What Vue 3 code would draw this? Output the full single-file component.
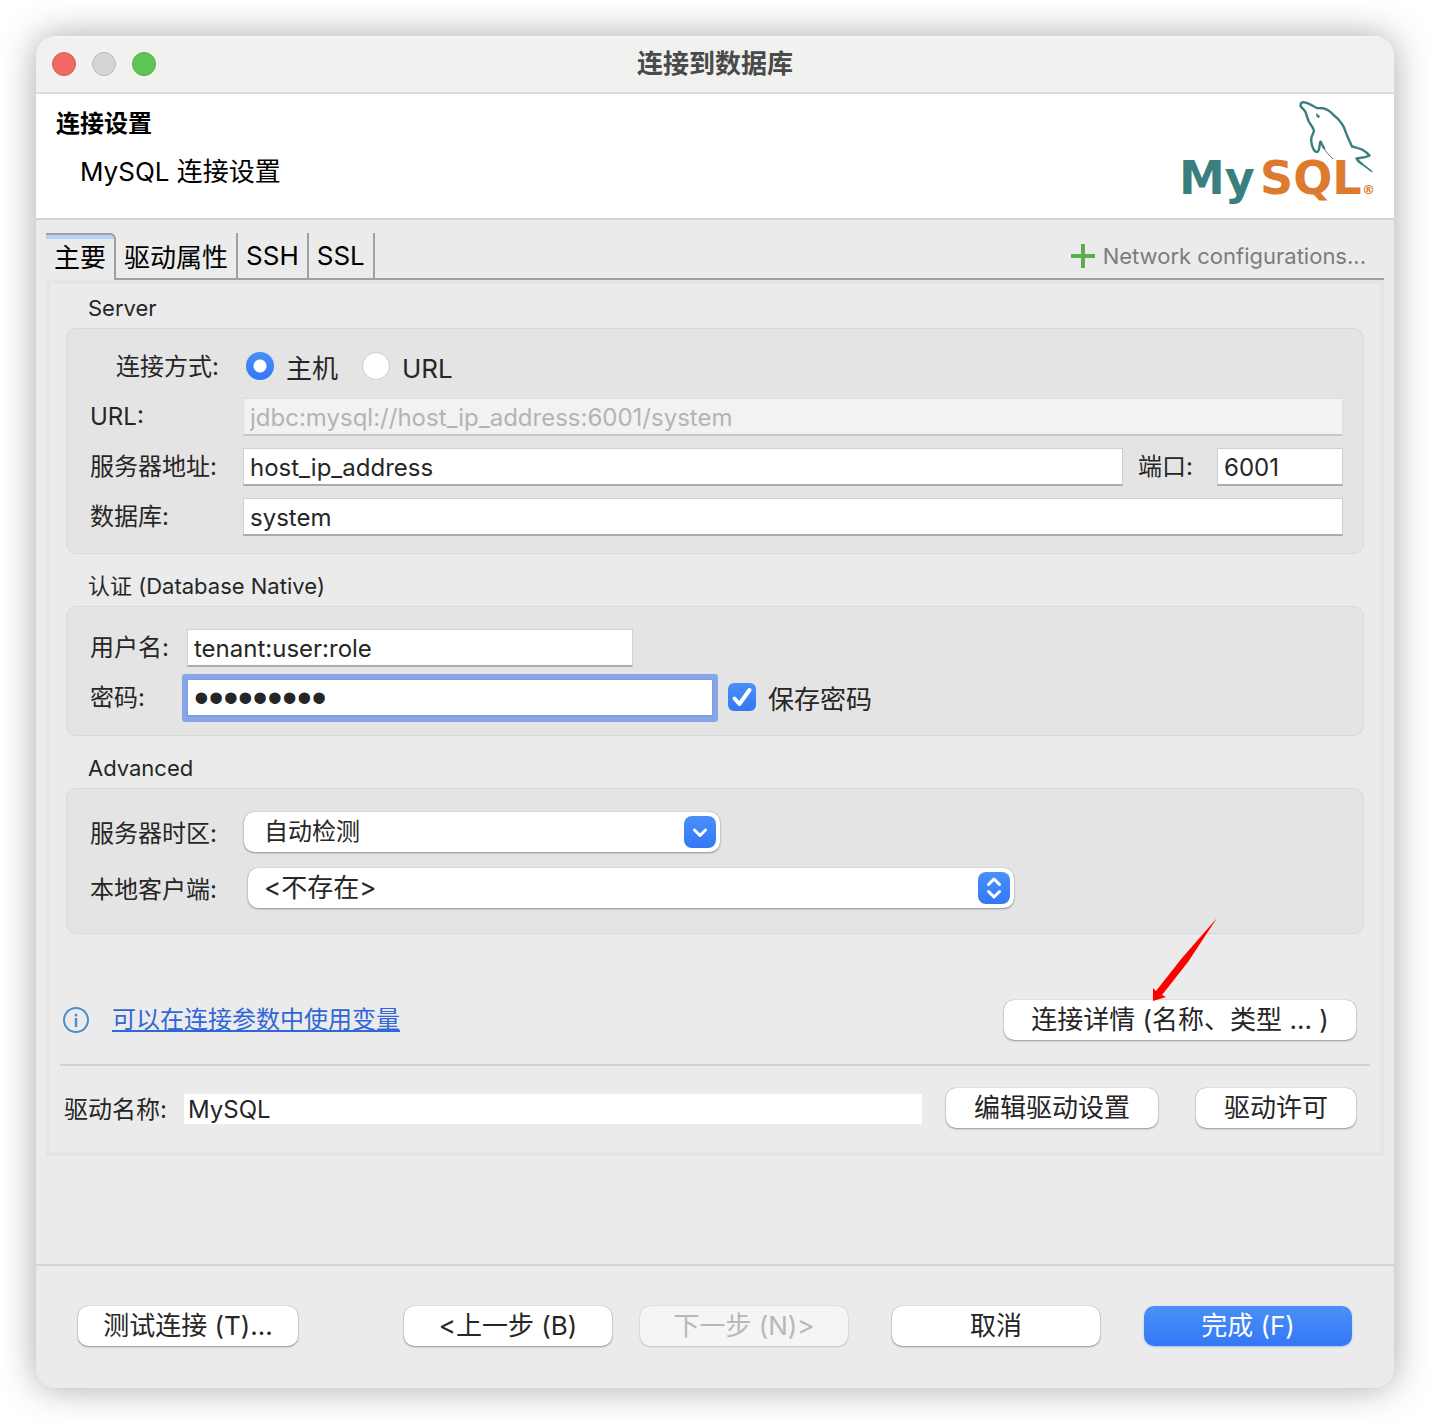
<script setup>
import { ref } from 'vue'

const tabs = ['主要', '驱动属性', 'SSH', 'SSL']
const activeTab = ref(0)

const mode = ref('host')
const url = ref('jdbc:mysql://host_ip_address:6001/system')
const host = ref('host_ip_address')
const port = ref('6001')
const database = ref('system')
const user = ref('tenant:user:role')
const password = ref('password1')
const savePassword = ref(true)
const driver = ref('MySQL')
</script>

<template>
  <div class="desktop">
    <main class="window">
      <header class="titlebar">
        <div class="lights">
          <button class="light close" aria-label="关闭"></button>
          <button class="light minimize" aria-label="最小化" disabled></button>
          <button class="light zoom" aria-label="缩放"></button>
        </div>
        <h1 class="title">连接到数据库</h1>
      </header>

      <div class="banner">
        <div>
          <h2 class="banner-title">连接设置</h2>
          <p class="banner-sub">MySQL 连接设置</p>
        </div>
        <svg class="logo" viewBox="0 0 200 106" width="200" height="106" aria-label="MySQL">
          <g fill="none" stroke="#3a7f80" stroke-linejoin="round" stroke-linecap="round">
            <path stroke-width="2.400" d="M122.700 8C122 5 124 4 126 4.300C130 4.700 134 7.500 138.700 10L145.500 10.300C150 11.500 153 14 155.500 17C159 19.500 162 22.500 164 26C166.500 29.500 167.500 34 169 37.500L174 48.500C177.500 49.500 181 50 184 51.500C187.500 53.500 190 55.500 191.500 57.500C188 59.500 183 59.500 178.500 60.500C179.500 63 182 64.500 184 66" />
            <path stroke-width="1.600" d="M184 66L193.700 73.300" />
            <path stroke-width="2.400" d="M122.700 8C123.500 10 126 11.500 127.500 14L130.500 23C132 26 135 29 136 32.500C135.500 35.500 133.500 37.500 133.200 41C133.200 45 134 49 136 52C137 53.500 138.500 54.500 140 53.500C142 51.500 141 47 142.500 43.500C143.500 45 144.500 48 146 50" />
            <path stroke-width="1" d="M146 50C148 54 151 57.500 154.700 60.500" />
          </g>
          <path d="M138 15L142 18L141 20L138.500 19Z" fill="#3a7f80" />
          <text class="word" x="1" y="96" fill="#3a7f80">My</text>
          <text class="word" x="82" y="96" fill="#dc7b30">SQL</text>
          <text class="reg" x="184" y="96" fill="#dc7b30">®</text>
        </svg>
      </div>

      <div class="body">
        <div class="tabbar">
          <div class="tabs" role="tablist">
            <button
              v-for="(tab, i) in tabs"
              :key="tab"
              role="tab"
              class="tab"
              :class="{ active: i === activeTab }"
              :aria-selected="i === activeTab"
              @click="activeTab = i"
            >{{ tab }}</button>
          </div>
          <div class="tabbar-rest">
            <button class="network">
              <svg viewBox="0 0 24 24" width="24" height="24" aria-hidden="true">
                <path d="M12 0V24M0 12H24" stroke="#62ab50" stroke-width="4" />
              </svg>
              Network configurations...
            </button>
          </div>
        </div>

        <div class="panel" role="tabpanel">
          <h3 class="legend">Server</h3>
          <section class="group server">
            <div class="row">
              <span id="mode-label" class="label wide indent">连接方式:</span>
              <div class="radios" role="radiogroup" aria-labelledby="mode-label">
                <label class="choice"><input v-model="mode" class="radio" type="radio" value="host" /><span class="choice-text">主机</span></label>
                <label class="choice"><input v-model="mode" class="radio" type="radio" value="url" /><span class="choice-text">URL</span></label>
              </div>
            </div>
            <div class="row">
              <label class="label wide" for="url">URL:</label>
              <input id="url" v-model="url" class="field" type="text" disabled />
            </div>
            <div class="row">
              <label class="label wide" for="host">服务器地址:</label>
              <input id="host" v-model="host" class="field" type="text" />
              <label class="label port-label" for="port">端口:</label>
              <input id="port" v-model="port" class="field port" type="text" />
            </div>
            <div class="row">
              <label class="label wide" for="db">数据库:</label>
              <input id="db" v-model="database" class="field" type="text" />
            </div>
          </section>

          <h3 class="legend">认证 (Database Native)</h3>
          <section class="group auth">
            <div class="row">
              <label class="label narrow" for="user">用户名:</label>
              <input id="user" v-model="user" class="field user" type="text" />
            </div>
            <div class="row">
              <label class="label narrow" for="pass">密码:</label>
              <input id="pass" v-model="password" class="field pass" type="password" />
              <label class="choice save">
                <span class="check-box">
                  <input v-model="savePassword" class="check" type="checkbox" />
                  <svg v-if="savePassword" class="tick" viewBox="0 0 28 28" aria-hidden="true">
                    <path d="M6.500 15.500L11.500 21L21.500 7" fill="none" stroke="#fff" stroke-width="4" stroke-linecap="round" stroke-linejoin="round" />
                  </svg>
                </span>
                <span class="choice-text">保存密码</span>
              </label>
            </div>
          </section>

          <h3 class="legend">Advanced</h3>
          <section class="group advanced">
            <div class="row">
              <label class="label wide" for="tz">服务器时区:</label>
              <div class="select-wrap tz">
                <select id="tz" class="select"><option>自动检测</option></select>
                <svg class="chip" viewBox="0 0 32 32" aria-hidden="true">
                  <path d="M10.500 14L16 19.500L21.500 14" />
                </svg>
              </div>
            </div>
            <div class="row">
              <label class="label wide" for="client">本地客户端:</label>
              <div class="select-wrap client">
                <select id="client" class="select large"><option>&lt;不存在&gt;</option></select>
                <svg class="chip" viewBox="0 0 32 32" aria-hidden="true">
                  <path d="M10.500 12.500L16 7L21.500 12.500M10.500 19.500L16 25L21.500 19.500" />
                </svg>
              </div>
            </div>
          </section>

          <div class="hint">
            <svg class="info" viewBox="0 0 26 26" width="26" height="26" aria-hidden="true">
              <circle cx="13" cy="13" r="12" fill="none" stroke="#4a8ecb" stroke-width="2" />
              <circle cx="13" cy="8" r="1.500" fill="#4a8ecb" />
              <path d="M13 11V20" stroke="#4a8ecb" stroke-width="2.500" />
            </svg>
            <a class="link" href="#">可以在连接参数中使用变量</a>
            <div class="details-wrap">
              <button class="btn details">连接详情 (名称、类型 ... )</button>
              <svg class="arrow" viewBox="0 0 66 84" aria-hidden="true">
                <path d="M1 83L1 70L4 73L30 40L65 0L36 44L10 77L14 79Z" fill="#f00" />
              </svg>
            </div>
          </div>

          <div class="driver">
            <label class="label" for="driver">驱动名称:</label>
            <input id="driver" v-model="driver" class="driver-name" type="text" readonly />
            <button class="btn edit">编辑驱动设置</button>
            <button class="btn license">驱动许可</button>
          </div>
        </div>
      </div>

      <footer class="footer">
        <button class="btn test">测试连接 (T)...</button>
        <div class="steps">
          <button class="btn step">&lt;上一步 (B)</button>
          <button class="btn step" disabled>下一步 (N)&gt;</button>
        </div>
        <button class="btn step">取消</button>
        <button class="btn step primary">完成 (F)</button>
      </footer>
    </main>
  </div>
</template>

<style>
body {
  background: #fff;
}
</style>

<style scoped>
.desktop {
  padding: 36px;
  font-family: Inter, "Noto Sans CJK SC", sans-serif;
  font-size: 24px;
  line-height: 32px;
  color: #262626;
}
.desktop * {
  box-sizing: border-box;
}
button,
input,
select {
  font-family: inherit;
  color: inherit;
  margin: 0;
}
h1,
h2,
h3,
p {
  margin: 0;
}
.window {
  background: #ebebeb;
  border-radius: 20px;
  overflow: hidden;
  box-shadow: 0 0 36px rgba(0, 0, 0, 0.34);
}
.titlebar {
  position: relative;
  display: flex;
  align-items: center;
  justify-content: center;
  height: 58px;
  padding-bottom: 2px;
  background: #f1f1ef;
  border-top: 1px solid #fafafa;
  border-bottom: 2px solid #dcdcdc;
}
.lights {
  position: absolute;
  left: 16px;
  top: 15px;
  display: flex;
  gap: 16px;
}
.light {
  width: 24px;
  height: 24px;
  padding: 0;
  border-radius: 50%;
  border: 1px solid;
}
.close {
  background: #ed6b60;
  border-color: #d95b50;
}
.minimize {
  background: #d5d5d4;
  border-color: #b9b9b8;
}
.zoom {
  background: #61c555;
  border-color: #50ae45;
}
.title {
  font-size: 26px;
  font-weight: 700;
  color: #4a4a4a;
}
.banner {
  display: flex;
  justify-content: space-between;
  background: #fff;
  color: #000;
  height: 126px;
  padding: 4px 16px 0 20px;
  border-bottom: 2px solid #d4d4d4;
}
.banner-title {
  margin-top: 10px;
  font-size: 24px;
  font-weight: 700;
}
.banner-sub {
  margin-top: 16px;
  padding-left: 24px;
  font-size: 26px;
}
.word {
  font: 700 46px "DejaVu Sans", sans-serif;
}
.reg {
  font: 700 13px "DejaVu Sans", sans-serif;
}
.body {
  padding: 13px 10px 108px;
}
.tabbar {
  display: flex;
  height: 47px;
}
.tabs {
  display: flex;
}
.tab {
  padding: 0 8px;
  border: 0;
  border-right: 2px solid #a0a0a0;
  border-bottom: 2px solid #a0a0a0;
  background: none;
  color: #000;
  font-size: 26px;
}
.tab.active {
  padding-bottom: 4px;
  border-top: 2px solid #a0a0a0;
  border-bottom: 0;
  border-top-right-radius: 6px;
  background: linear-gradient(#b5d2fb 4px, #ebebeb 4px);
}
.tabbar-rest {
  display: flex;
  flex: 1;
  justify-content: flex-end;
  padding-right: 18px;
  border-bottom: 2px solid #a0a0a0;
}
.network {
  display: flex;
  align-items: center;
  gap: 8px;
  padding: 0;
  border: 0;
  background: none;
  color: #7c7c7c;
  font-size: 22px;
}
.panel {
  border: 4px solid #e5e5e5;
  padding: 4px 16px 24px;
}
.legend {
  padding-left: 22px;
  font-size: 22px;
  font-weight: 400;
  line-height: 40px;
}
.group {
  display: flex;
  flex-direction: column;
  gap: 12px;
  border: 1px solid #d9d9d9;
  border-radius: 10px;
  background: #e4e4e4;
}
.group + .legend {
  margin-top: 12px;
}
.server {
  padding: 19px 20px 17px 23px;
}
.auth {
  padding: 22px 20px 18px 23px;
}
.advanced {
  gap: 16px;
  padding: 23px 20px 25px 23px;
}
.advanced .label {
  padding-top: 4px;
}
.row {
  display: flex;
  align-items: center;
}
.label {
  flex: none;
  white-space: nowrap;
}
.wide {
  width: 153px;
}
.narrow {
  width: 97px;
}
.indent {
  padding-left: 26px;
}
.radios {
  display: flex;
  gap: 24px;
  height: 38px;
  padding-left: 3px;
}
.choice {
  display: flex;
  align-items: center;
  gap: 12px;
  font-size: 26px;
  white-space: nowrap;
}
.choice-text {
  padding-top: 4px;
}
.radio {
  appearance: none;
  width: 28px;
  height: 28px;
  margin-bottom: 2px;
  border-radius: 50%;
  border: 1px solid #cbcbcb;
  background: #fff;
}
.radio:checked {
  border: 0;
  background: radial-gradient(circle, #fff 6px, transparent 7px), linear-gradient(#4a90f8, #3377f6);
}
.field {
  flex: 1;
  min-width: 0;
  height: 38px;
  padding: 2px 6px 0;
  border: 1px solid #d0d0d0;
  border-bottom: 2px solid #ababab;
  border-radius: 0;
  background: #fff;
  font-size: 24px;
}
.field:disabled {
  background: #f2f2f2;
  border-color: #dedede;
  border-bottom-color: #c8c8c8;
  color: #b4b4b4;
}
.port-label {
  width: 94px;
  padding-left: 15px;
}
.port {
  flex: 0 0 126px;
}
.user {
  flex: 0 0 446px;
}
.pass {
  flex: 0 0 526px;
  padding-top: 0;
  border-color: #7d9ce4;
  box-shadow: 0 0 0 5px #88a5e8;
  border-radius: 1px;
  outline: 0;
  font-family: "Liberation Sans", sans-serif;
  font-size: 42px;
}
.save {
  padding-left: 15px;
}
.check-box {
  position: relative;
  width: 28px;
  height: 28px;
  margin-bottom: 2px;
}
.check {
  appearance: none;
  display: block;
  width: 28px;
  height: 28px;
  border-radius: 6px;
  border: 1px solid #cbcbcb;
  background: #fff;
}
.check:checked {
  border: 0;
  background: linear-gradient(#4a90f8, #3377f6);
}
.tick {
  position: absolute;
  inset: 0;
  pointer-events: none;
}
.select-wrap {
  position: relative;
}
.tz {
  width: 477px;
  padding-left: 1px;
}
.client {
  width: 771px;
  padding-left: 5px;
}
.select {
  appearance: none;
  display: block;
  width: 100%;
  height: 40px;
  padding: 0 48px 2px 20px;
  border: 0;
  border-radius: 10px;
  background: #fff;
  box-shadow: 0 0 1px rgba(0, 0, 0, 0.4), 0 1px 2px rgba(0, 0, 0, 0.35);
  font-size: 24px;
}
.large {
  padding-left: 16px;
  font-size: 26px;
}
.chip {
  position: absolute;
  right: 4px;
  top: 4px;
  width: 32px;
  height: 32px;
  border-radius: 8px;
  background: linear-gradient(#4a90f8, #3377f6);
  fill: none;
  stroke: #fff;
  stroke-width: 3;
  stroke-linecap: round;
  stroke-linejoin: round;
  pointer-events: none;
}
.hint {
  display: flex;
  align-items: center;
  margin: 42px -6px 0 -6px;
  padding: 24px 14px 24px 3px;
  border-bottom: 2px solid #d2d2d2;
}
.link {
  margin-left: 23px;
  color: #2f66d8;
  text-decoration-thickness: 2px;
  text-underline-offset: 2px;
}
.details-wrap {
  position: relative;
  margin-left: auto;
}
.arrow {
  position: absolute;
  left: 148px;
  top: -82px;
  width: 66px;
  height: 84px;
  pointer-events: none;
}
.btn {
  display: block;
  height: 40px;
  padding: 0 8px;
  border: 0;
  border-radius: 10px;
  background: #fff;
  box-shadow: 0 0 1px rgba(0, 0, 0, 0.4), 0 1px 2px rgba(0, 0, 0, 0.35);
  font-size: 26px;
  line-height: 38px;
  white-space: nowrap;
}
.details {
  width: 352px;
}
.driver {
  display: flex;
  align-items: center;
  margin-top: 22px;
  padding-right: 8px;
}
.driver .label {
  width: 120px;
  margin-left: -2px;
  padding-top: 4px;
}
.driver-name {
  flex: 1;
  min-width: 0;
  height: 30px;
  margin-top: 2px;
  padding: 0 4px;
  border: 0;
  background: #fff;
  font-size: 24px;
}
.edit {
  width: 212px;
  margin-left: 24px;
}
.license {
  width: 160px;
  margin-left: 38px;
}
.footer {
  display: flex;
  gap: 44px;
  padding: 40px 42px 42px;
  border-top: 2px solid #d4d4d4;
}
.steps {
  display: flex;
  gap: 28px;
  margin-left: auto;
}
.test {
  width: 220px;
}
.step {
  width: 208px;
}
.btn:disabled {
  background: #f5f5f5;
  color: #b8b8b8;
  box-shadow: 0 0 1px rgba(0, 0, 0, 0.25), 0 1px 2px rgba(0, 0, 0, 0.15);
}
.primary {
  background: linear-gradient(#4a90f8, #3377f6);
  color: #fff;
  box-shadow: 0 1px 2px rgba(51, 119, 246, 0.4);
}
</style>
